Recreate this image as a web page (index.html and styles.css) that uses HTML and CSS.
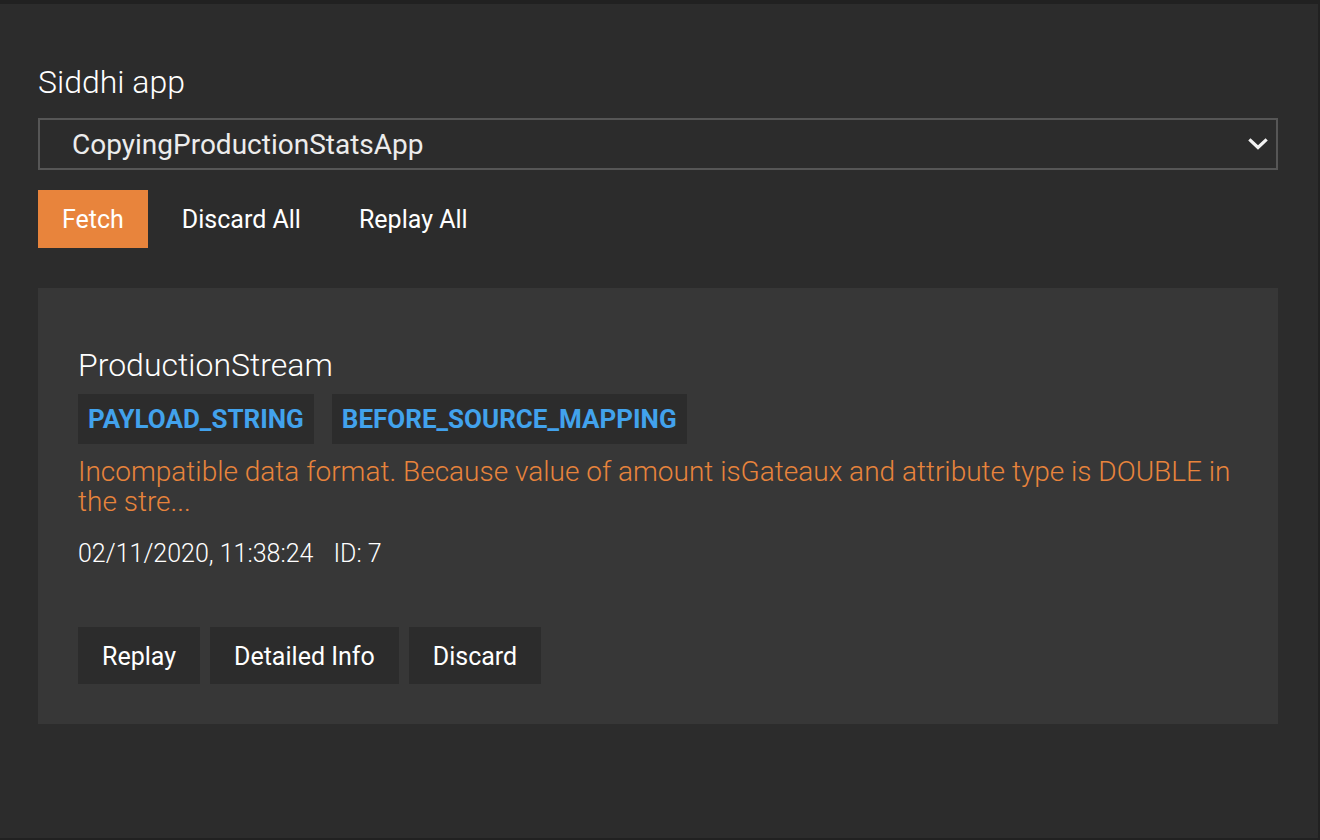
FILE: index.html
```html
<!DOCTYPE html>
<html lang="en">
<head>
<meta charset="utf-8">
<title>Error Store</title>
<link rel="stylesheet" href="styles.css">
</head>
<body>
<div class="frame">
  <div class="label">Siddhi app</div>
  <div class="select">
    <span class="select-value">CopyingProductionStatsApp</span>
    <svg class="chevron" width="20" height="14" viewBox="0 0 20 14" aria-hidden="true">
      <path d="M2.5 3.5 L10 10.5 L17.5 3.5" fill="none" stroke="#f2f2f2" stroke-width="3.2" stroke-linecap="square"/>
    </svg>
  </div>
  <div class="actions">
    <button class="btn btn-primary">Fetch</button>
    <button class="btn btn-text">Discard All</button>
    <button class="btn btn-text">Replay All</button>
  </div>
  <div class="card">
    <div class="stream">ProductionStream</div>
    <div class="tags">
      <span class="tag">PAYLOAD_STRING</span>
      <span class="tag">BEFORE_SOURCE_MAPPING</span>
    </div>
    <div class="error">Incompatible data format. Because value of amount isGateaux and attribute type is DOUBLE in the stre...</div>
    <div class="meta"><span>02/11/2020, 11:38:24</span><span class="id">ID: 7</span></div>
    <div class="card-actions">
      <button class="btn btn-dark">Replay</button>
      <button class="btn btn-dark">Detailed Info</button>
      <button class="btn btn-dark">Discard</button>
    </div>
  </div>
</div>
</body>
</html>
```
FILE: styles.css
```css
html, body {
  margin: 0;
  padding: 0;
  background: #212121;
}
body {
  font-family: Roboto, "Noto Sans", "Liberation Sans", sans-serif;
  color: #ffffff;
}
.frame {
  margin: 4px 2px 2px 0;
  height: 834px;
  box-sizing: border-box;
  background: #2c2c2c;
  padding: 58px 40px 0 38px;
}
.label {
  font-size: 32px;
  font-weight: 300;
  line-height: 40px;
  color: #ffffff;
}
.select {
  margin-top: 16px;
  height: 52px;
  box-sizing: border-box;
  border: 2px solid #565656;
  display: flex;
  align-items: center;
  justify-content: space-between;
  padding: 0 8px 0 32px;
}
.select-value {
  font-size: 28px;
  font-weight: 400;
  color: #ececec;
}
.chevron {
  display: block;
}
.actions {
  margin-top: 20px;
  display: flex;
  gap: 10px;
}
.btn {
  font-family: inherit;
  font-size: 25px;
  font-weight: 400;
  color: #ffffff;
  border: none;
  height: 58px;
  padding: 2px 24px 0 24px;
  background: transparent;
  line-height: 28px;
  cursor: pointer;
}
.btn-primary {
  background: #e8843c;
}
.card {
  margin-top: 40px;
  background: #373737;
  padding: 48px 40px 40px 40px;
}
.stream {
  font-size: 32px;
  font-weight: 300;
  line-height: 58px;
}
.tags {
  display: flex;
  gap: 18px;
}
.tag {
  background: #2c2c2c;
  color: #42a2ec;
  font-size: 26px;
  font-weight: 700;
  height: 50px;
  line-height: 50px;
  padding: 0 10px;
}
.error {
  margin-top: 13px;
  color: #e8843c;
  font-size: 28px;
  font-weight: 300;
  line-height: 30px;
}
.meta {
  margin-top: 22px;
  font-size: 25px;
  font-weight: 300;
  line-height: 30px;
  display: flex;
  gap: 20px;
}
.card-actions {
  margin-top: 58px;
  display: flex;
  gap: 10px;
}
.btn-dark {
  background: #2c2c2c;
  height: 57px;
}
```
